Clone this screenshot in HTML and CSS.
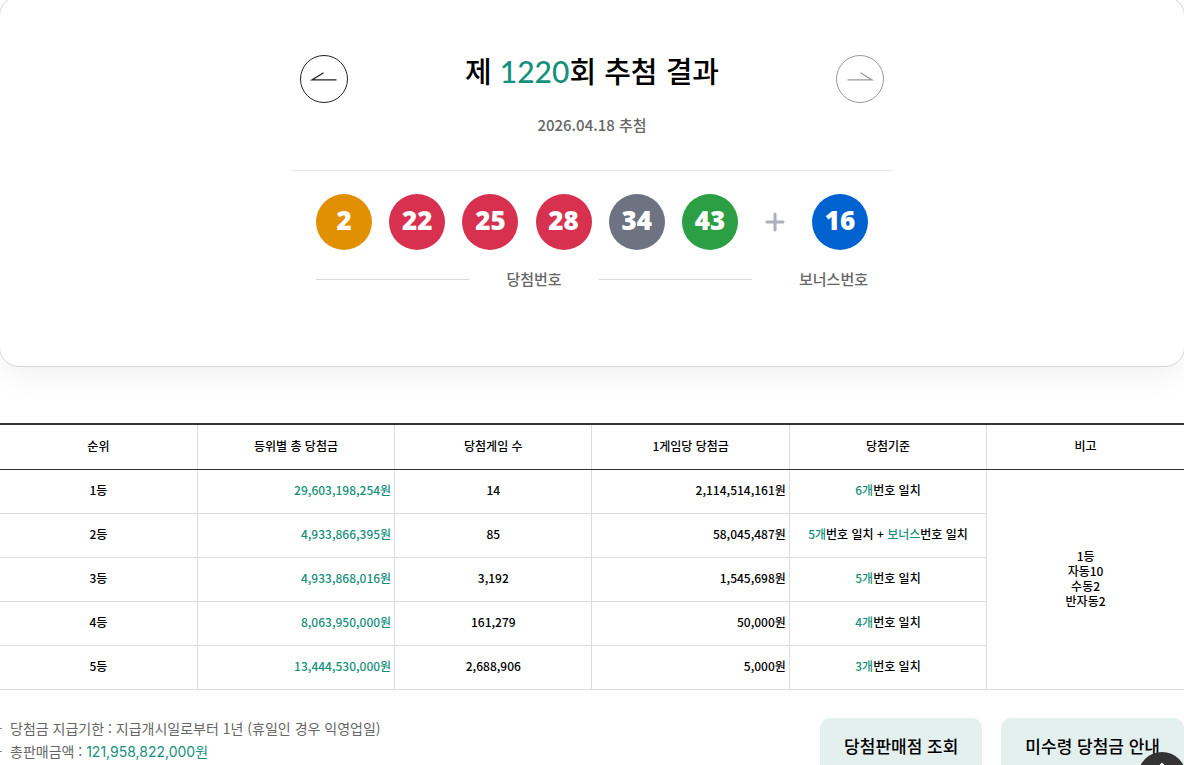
FILE: index.html
```
<!DOCTYPE html>
<html lang="ko">
<head>
  <meta charset="UTF-8">
  <meta name="viewport" content="width=device-width, initial-scale=1.0">
  <title>제 1220회 추첨 결과</title>
  <link rel="stylesheet" href="styles.css">
</head>
<body>
  <section class="result-card">
    <div class="result-head">
      <button type="button" class="nav-btn" aria-label="이전 회차">
        <svg viewBox="0 0 48 48" fill="none" stroke="currentColor">
          <path d="M37 25H11.500L23.500 17.500" stroke-width="1.300"/>
        </svg>
      </button>
      <div class="result-title">
        <h1>제 <span class="round">1220</span>회 추첨 결과</h1>
        <p class="date">2026.04.18 추첨</p>
      </div>
      <button type="button" class="nav-btn next" aria-label="다음 회차">
        <svg viewBox="0 0 48 48" fill="none" stroke="currentColor">
          <path d="M11 25H36.500L24.500 17.500" stroke-width="1.300"/>
        </svg>
      </button>
    </div>
    <div class="result-balls">
      <div class="win">
        <div class="balls">
          <span class="ball yellow">2</span>
          <span class="ball red">22</span>
          <span class="ball red">25</span>
          <span class="ball red">28</span>
          <span class="ball gray">34</span>
          <span class="ball green">43</span>
        </div>
        <p class="ball-label lined">당첨번호</p>
      </div>
      <svg class="plus" viewBox="0 0 20 20" stroke="#aeaebc" stroke-width="3" stroke-linecap="round">
        <path d="M10 2v16M2 10h16"/>
      </svg>
      <div class="bonus">
        <span class="ball blue">16</span>
        <p class="ball-label">보너스번호</p>
      </div>
    </div>
  </section>

  <table class="prize-table">
    <thead>
      <tr>
        <th scope="col">순위</th>
        <th scope="col">등위별 총 당첨금</th>
        <th scope="col">당첨게임 수</th>
        <th scope="col">1게임당 당첨금</th>
        <th scope="col">당첨기준</th>
        <th scope="col">비고</th>
      </tr>
    </thead>
    <tbody>
      <tr>
        <td>1등</td>
        <td class="money point">29,603,198,254원</td>
        <td>14</td>
        <td class="money">2,114,514,161원</td>
        <td><span class="point">6개</span>번호 일치</td>
        <td class="note" rowspan="5">1등<br>자동10<br>수동2<br>반자동2</td>
      </tr>
      <tr>
        <td>2등</td>
        <td class="money point">4,933,866,395원</td>
        <td>85</td>
        <td class="money">58,045,487원</td>
        <td><span class="point">5개</span>번호 일치 + <span class="point">보너스</span>번호 일치</td>
      </tr>
      <tr>
        <td>3등</td>
        <td class="money point">4,933,868,016원</td>
        <td>3,192</td>
        <td class="money">1,545,698원</td>
        <td><span class="point">5개</span>번호 일치</td>
      </tr>
      <tr>
        <td>4등</td>
        <td class="money point">8,063,950,000원</td>
        <td>161,279</td>
        <td class="money">50,000원</td>
        <td><span class="point">4개</span>번호 일치</td>
      </tr>
      <tr>
        <td>5등</td>
        <td class="money point">13,444,530,000원</td>
        <td>2,688,906</td>
        <td class="money">5,000원</td>
        <td><span class="point">3개</span>번호 일치</td>
      </tr>
    </tbody>
  </table>

  <div class="bottom">
    <ul class="info">
      <li>당첨금 지급기한 : 지급개시일로부터 1년 (휴일인 경우 익영업일)</li>
      <li>총판매금액 : <span class="point total">121,958,822,000원</span></li>
    </ul>
    <div class="links">
      <a href="#" class="link-btn">당첨판매점 조회</a>
      <a href="#" class="link-btn">미수령 당첨금 안내</a>
    </div>
  </div>

  <button type="button" class="top-btn" aria-label="맨 위로">
    <svg viewBox="0 0 48 48" fill="none" stroke="#fff" stroke-width="2">
      <path d="M16 20l8-8 8 8M24 12v24"/>
    </svg>
  </button>
</body>
</html>
```
FILE: styles.css
```
* { box-sizing: border-box; }
body {
  margin: 0;
  background-color: #fff;
  color: #000;
  font-family: "Noto Sans CJK KR", sans-serif;
  overflow: hidden;
}
h1, p, ul {
  margin: 0;
  padding: 0;
}
.point { color: #15917b; }

/* result card */
.result-card {
  margin: -4px -1px 0;
  padding: 54px 20px 76px;
  border: 1px solid #d5d5d5;
  border-radius: 20px;
  box-shadow: 0 10px 30px rgba(0, 0, 0, 0.05);
  display: flex;
  flex-direction: column;
  align-items: center;
}
.result-head {
  width: 100%;
  max-width: 600px;
  padding: 0 8px 33px;
  border-bottom: 1px solid #e5e5e5;
  display: flex;
  justify-content: space-between;
  align-items: flex-start;
}
.nav-btn {
  width: 48px;
  height: 48px;
  margin-top: 4px;
  padding: 0;
  border: 1px solid #222;
  border-radius: 50%;
  background: none;
  color: #222;
  cursor: pointer;
}
.nav-btn.next {
  border-color: #999;
  color: #999;
}
.nav-btn svg {
  display: block;
  width: 100%;
}
.result-title { text-align: center; }
.result-title h1 {
  font-size: 29px;
  font-weight: 500;
  line-height: 38px;
}
.round {
  color: #15917b;
  font-family: Lato, sans-serif;
  font-size: 30px;
}
.date {
  margin-top: 23px;
  color: #666;
  font-size: 15px;
  font-weight: 500;
  line-height: 24px;
}
.result-balls {
  margin-top: 23px;
  display: flex;
  align-items: flex-start;
}
.win { width: 436px; }
.balls {
  width: 422px;
  display: flex;
  justify-content: space-between;
}
.ball {
  width: 56px;
  height: 56px;
  border-radius: 50%;
  color: #fff;
  font-family: "Open Sans", sans-serif;
  font-size: 26px;
  font-weight: 800;
  line-height: 52px;
  text-align: center;
}
.yellow { background-color: #e09000; }
.red { background-color: #d8314f; }
.gray { background-color: #6e7382; }
.green { background-color: #2c9f45; }
.blue { background-color: #0062cf; }
.plus {
  width: 20px;
  height: 20px;
  margin: 18px 14px 0 13px;
}
.ball-label {
  margin-top: 18px;
  color: #666;
  font-size: 15px;
  font-weight: 500;
  line-height: 22px;
  text-align: center;
}
.ball-label.lined {
  display: flex;
  align-items: center;
  justify-content: space-between;
}
.lined::before,
.lined::after {
  content: "";
  width: 153px;
  height: 1px;
  background-color: #d8d8d8;
}
.bonus {
  width: 69px;
  display: flex;
  flex-direction: column;
  align-items: flex-end;
}

/* prize table */
.prize-table {
  width: 100%;
  margin-top: 56px;
  border-collapse: collapse;
  border-top: 2px solid #333;
  table-layout: fixed;
  font-size: 12px;
  line-height: 15px;
  text-align: center;
}
.prize-table th,
.prize-table td {
  height: 44px;
  padding: 0 3px 3px;
  border-right: 1px solid #ddd;
  border-bottom: 1px solid #ddd;
  font-weight: 500;
}
.prize-table th {
  height: 45px;
  border-bottom-color: #333;
}
.prize-table th:last-child,
.prize-table .note { border-right: none; }
.prize-table .money { text-align: right; }

/* info and links */
.bottom {
  padding-top: 28px;
  display: flex;
  justify-content: space-between;
}
.info {
  margin-top: -1px;
  color: #666;
  font-size: 14px;
  line-height: 23px;
  list-style: none;
}
.info li {
  padding-left: 10px;
  position: relative;
}
.info li::before {
  content: "";
  position: absolute;
  top: 11px;
  left: 0;
  width: 2px;
  height: 1px;
  background-color: #888;
}
.total { font-family: Inter, "Noto Sans CJK KR", sans-serif; }
.links {
  display: flex;
  gap: 19px;
}
.link-btn {
  height: 58px;
  padding: 0 24px;
  border-radius: 10px;
  background-color: #e3f0ed;
  color: #000;
  font-size: 17px;
  font-weight: 500;
  line-height: 56px;
  text-decoration: none;
}
.top-btn {
  position: fixed;
  right: -2px;
  bottom: -35px;
  width: 48px;
  height: 48px;
  padding: 0;
  border: none;
  border-radius: 50%;
  background-color: #333;
  cursor: pointer;
}
.top-btn svg { display: block; }
```
